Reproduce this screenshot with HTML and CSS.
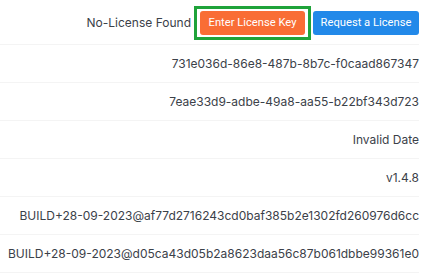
FILE: index.html
```html
<!DOCTYPE html>
<html>
<head>
<meta charset="utf-8">
<link rel="stylesheet" href="styles.css">
</head>
<body>
<div class="panel">
  <div class="header">
    <span class="status">No-License Found</span>
    <span class="focus-ring"><button class="btn btn-orange">Enter License Key</button></span>
    <button class="btn btn-blue">Request a License</button>
  </div>
  <div class="row">731e036d-86e8-487b-8b7c-f0caad867347</div>
  <div class="row">7eae33d9-adbe-49a8-aa55-b22bf343d723</div>
  <div class="row">Invalid Date</div>
  <div class="row">v1.4.8</div>
  <div class="row">BUILD+28-09-2023@af77d2716243cd0baf385b2e1302fd260976d6cc</div>
  <div class="row">BUILD+28-09-2023@d05ca43d05b2a8623daa56c87b061dbbe99361e0</div>
</div>
</body>
</html>
```
FILE: styles.css
```css
html, body {
  margin: 0;
  padding: 0;
  background: #ffffff;
}
.panel {
  width: 419px;
  font-family: Inter, "Noto Sans", sans-serif;
  color: #3b4149;
}
.header {
  height: 45px;
  display: flex;
  justify-content: flex-end;
  align-items: center;
  border-bottom: 1px solid #f4f4f4;
  padding-top: 1px;
  box-sizing: border-box;
}
.status {
  font-size: 12px;
  margin-right: 3px;
  white-space: nowrap;
}
.focus-ring {
  display: flex;
  border: 3px solid #1fa33a;
  padding: 2px 3px;
}
.btn {
  font-family: Roboto, sans-serif;
  font-size: 11.2px;
  color: #fff;
  border: none;
  border-radius: 3px;
  height: 24px;
  padding: 0;
  line-height: 24px;
  white-space: nowrap;
  text-align: center;
}
.btn-orange {
  background: #f96d35;
  width: 105px;
}
.btn-blue {
  background: #2289e9;
  width: 106px;
  margin-left: 2px;
}
.row {
  height: 38px;
  box-sizing: border-box;
  border-bottom: 1px solid #f4f4f4;
  display: flex;
  align-items: center;
  justify-content: flex-end;
  font-size: 12px;
  padding-bottom: 1px;
  white-space: nowrap;
}
```
